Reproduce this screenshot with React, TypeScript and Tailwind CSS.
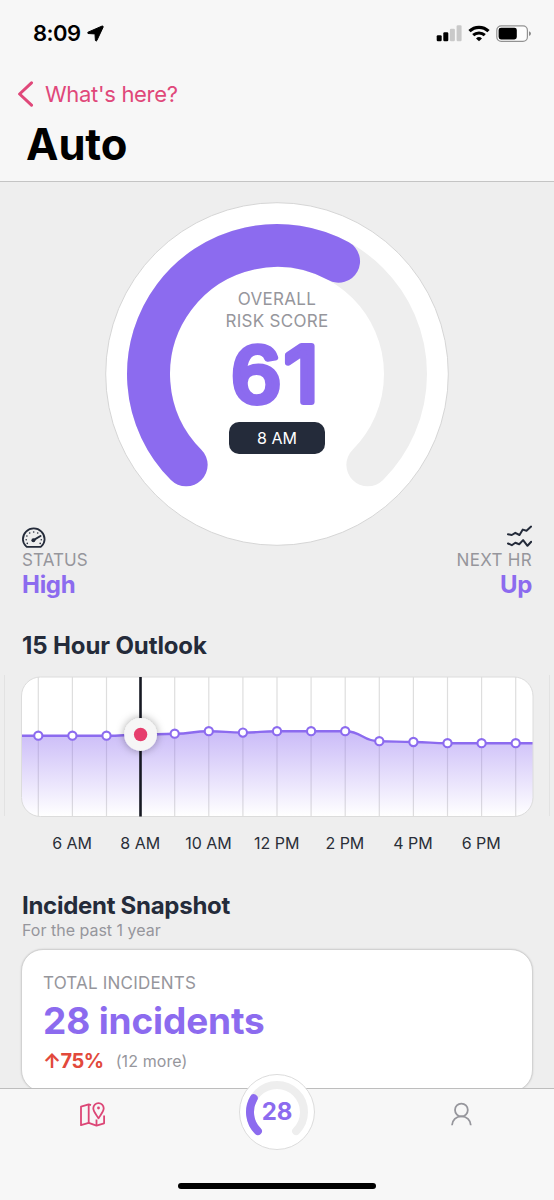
import React from "react";

const PURPLE = "#8c6bef";

const hours = [
   { label: "", y: 735.7 },
   { label: "6 AM", y: 735.7 },
   { label: "", y: 735.7 },
   { label: "8 AM", y: 734.7 },
   { label: "", y: 733.7 },
   { label: "10 AM", y: 731.2 },
   { label: "", y: 732.6 },
   { label: "12 PM", y: 731.2 },
   { label: "", y: 731.2 },
   { label: "2 PM", y: 731.2 },
   { label: "", y: 741.2 },
   { label: "4 PM", y: 742 },
   { label: "", y: 743.2 },
   { label: "6 PM", y: 743.2 },
   { label: "", y: 743.2 },
].map((hour, i) => ({ label: hour.label, x: 38.3 + i * 34.1, y: hour.y - 675 }));

// Open ring, 270 degrees long, starting at the bottom left
const arcPath = (c: number, r: number, percent: number) => {
   const point = (deg: number) => {
      const rad = (deg * Math.PI) / 180;
      return `${(c + r * Math.sin(rad)).toFixed(2)} ${(c - r * Math.cos(rad)).toFixed(2)}`;
   };
   const sweep = (270 * percent) / 100;
   return `M${point(-135)} A${r} ${r} 0 ${sweep > 180 ? 1 : 0} 1 ${point(-135 + sweep)}`;
};

function SpeedometerIcon() {
   return (
      <svg width="24" height="28" viewBox="0 0 24 28" fill="none" stroke="#242b3a">
         <path
            d="M4.2 23.3C2 21.3.9 18.9.9 16.2a10.85 10.85 0 0 1 21.7 0c0 2.7-1.1 5.1-3.3 7.1q-.6.6-1.5.6H5.7q-.9 0-1.5-.6Z"
            strokeWidth="1.8"
            strokeLinejoin="round"
         />
         <path d="m11.5 17.2 7-4.2" strokeWidth="2" strokeLinecap="round" />
         <g fill="#242b3a" stroke="none">
            <circle cx="11.4" cy="17.2" r="2" />
            <circle cx="11.7" cy="9" r="0.8" />
            <circle cx="7.7" cy="10" r="0.8" />
            <circle cx="15.7" cy="10" r="0.8" />
            <circle cx="4.9" cy="13" r="0.8" />
            <circle cx="4.2" cy="16.7" r="0.8" />
            <circle cx="5.3" cy="20.4" r="0.8" />
            <circle cx="19.3" cy="16.7" r="0.8" />
            <circle cx="18.2" cy="20.4" r="0.8" />
         </g>
      </svg>
   );
}

function TrendIcon() {
   return (
      <svg width="28" height="28" viewBox="0 0 28 28" fill="none" stroke="#242b3a" strokeWidth="2" strokeLinecap="round" strokeLinejoin="round">
         <path d="M4 11.3 7.8 12l3.5-2.2 4.2 2.2 3.3-5.4 3.7 1.1 4.6-4.1" />
         <path d="m4 20.5 3.8 1.7 3.5-2.5 3.9 1.5 3.9-4.1 4.4 5.7 3.7-4" />
      </svg>
   );
}

function MapIcon() {
   return (
      <svg width="27" height="27" viewBox="0 0 27 27" fill="none" stroke="#dc4676" strokeWidth="1.8" strokeLinejoin="round">
         <path d="M12 4.2 9.7 3.3 2 5.7V24.2l7.7-2.3 7.8 2.7 7.6-2.3V14.5" />
         <path d="M9.7 3.3V21.9M17.5 24.6V18.5" />
         <path d="M19.5 17.3c-1.7-3.2-5.2-6.5-5.2-10a5.2 5.2 0 0 1 10.4 0c0 3.5-3.5 6.8-5.2 10Z" />
         <circle cx="19.5" cy="7" r="1.4" fill="#dc4676" stroke="none" />
      </svg>
   );
}

function PersonIcon() {
   return (
      <svg width="26" height="27" viewBox="0 0 26 27" fill="none" stroke="#96969c" strokeWidth="1.8">
         <circle cx="13.4" cy="9" r="6.4" />
         <path d="M4 24.2c.3-5 4-8.8 9.4-8.8s9.1 3.8 9.4 8.8" />
      </svg>
   );
}

function StatusBar() {
   return (
      <div className="flex h-[67px] items-center justify-between pl-[33px] pr-[22px]">
         <div className="flex items-center gap-[6px]">
            <span className="-mt-px text-[22px] font-semibold leading-none tracking-[-0.5px]">8:09</span>
            <svg width="17" height="17" viewBox="0 0 17 17">
               <path
                  d="M15.2 1 1 7.2q-.8.6 0 1.3l6.6.4q.4 0 .4.5l.4 6q.6 1.4 1.4.2L16.2 2q.2-1-1-1Z"
                  stroke="#000"
                  strokeLinejoin="round"
               />
            </svg>
         </div>
         <div className="flex items-center gap-[6px]">
            <svg width="26" height="17" viewBox="0 0 26 17">
               <rect x="0.7" y="10.2" width="5" height="6" rx="1.2" />
               <rect x="7.3" y="7.2" width="5" height="9" rx="1.2" />
               <rect x="13.9" y="3.7" width="5" height="12.5" rx="1.2" fill="#c9c9c9" />
               <rect x="20.6" y="0.2" width="5" height="16" rx="1.2" fill="#c9c9c9" />
            </svg>
            <svg width="22" height="17" viewBox="0 0 22 17" fill="none" stroke="#000">
               <path d="M1.5 6.2a13.6 13.6 0 0 1 19 0" strokeWidth="3.2" />
               <path d="M5.2 10.2a8.4 8.4 0 0 1 11.6 0" strokeWidth="3" />
               <path d="M11 16.3 8 13.4a4.4 4.4 0 0 1 6 0Z" fill="#000" stroke="none" />
            </svg>
            <svg width="36" height="17" viewBox="0 0 36 17">
               <rect x="0.8" y="0.8" width="30.6" height="15.6" rx="4.4" fill="#fdfdfd" stroke="#929292" strokeWidth="1.2" />
               <rect x="2.6" y="2.7" width="18.2" height="11.8" rx="2.4" />
               <path d="M33 6.3q2 .6 2 2.3t-2 2.3Z" fill="#8a8a8a" />
            </svg>
         </div>
      </div>
   );
}

function Header() {
   return (
      <header className="h-[182px] shrink-0 border-b border-[#c4c4c4] bg-[#f7f7f7]">
         <StatusBar />
         <button className="flex h-[54px] items-center gap-[11px] pl-[17px] text-[#e0487a]">
            <svg width="17" height="26" viewBox="0 0 17 26" fill="none" stroke="currentColor">
               <path d="M14.5 1.8 2.6 13l11.9 11.2" strokeWidth="3" strokeLinecap="round" strokeLinejoin="round" />
            </svg>
            <span className="text-[22px] leading-none tracking-[-0.32px]">What's here?</span>
         </button>
         <h1 className="pl-[26px] text-[43.5px] font-bold leading-[46px] tracking-[-0.1px] text-black">Auto</h1>
      </header>
   );
}

function RiskGauge() {
   return (
      <div className="relative h-[344px] w-[344px] shrink-0 self-start">
         <svg width="344" height="344" viewBox="0 0 344 344" fill="none">
            <circle cx="172" cy="172" r="171.3" fill="#fff" stroke="#d6d6d6" />
            <path d={arcPath(172, 128.5, 100)} stroke="#eeeeee" strokeWidth="43" strokeLinecap="round" />
            <path d={arcPath(172, 128.5, 60.6)} stroke={PURPLE} strokeWidth="43" strokeLinecap="round" />
            {/* thick round stroke softens the digit corners */}
            <text
               className="font-['Liberation_Sans',sans-serif]"
               transform="scale(1.1 1)"
               x="115"
               y="200"
               fontSize="80"
               fill={PURPLE}
               stroke={PURPLE}
               strokeWidth="6"
               strokeLinejoin="round"
            >
               6
               <tspan className="font-['Inter',sans-serif]" x="163" fontSize="77">
                  1
               </tspan>
            </text>
         </svg>
         <div className="absolute inset-x-0 top-[87px] text-center text-[17px] leading-[21.5px] tracking-[0.3px] text-[#96969c]">
            OVERALL
            <br />
            RISK SCORE
         </div>
         <div className="absolute left-[124px] top-[220px] flex h-8 w-24 items-center justify-center rounded-[10px] bg-[#242b3a] text-base text-white">
            8 AM
         </div>
      </div>
   );
}

function Outlook() {
   const line = hours.reduce((path, p, i) => {
      if (i === 0) return `M22 ${p.y} L${p.x} ${p.y}`;
      const prev = hours[i - 1];
      const mid = (prev.x + p.x) / 2;
      return `${path} C${mid} ${prev.y} ${mid} ${p.y} ${p.x} ${p.y}`;
   }, "");
   const fullLine = `${line} L533 ${hours[14].y}`;

   return (
      <section>
         <h2 className="h-[46px] pl-[22px] text-2xl font-bold leading-[33px] tracking-[-0.12px] text-[#242b3a]">15 Hour Outlook</h2>
         <svg className="block" width="554" height="144" viewBox="0 0 554 144" fill="none">
            <defs>
               <linearGradient id="area" x1="0" y1="56" x2="0" y2="141" gradientUnits="userSpaceOnUse">
                  <stop offset="0" stopColor={PURPLE} stopOpacity="0.46" />
                  <stop offset="1" stopColor={PURPLE} stopOpacity="0" />
               </linearGradient>
               <clipPath id="panel">
                  <rect x="21.5" y="2" width="511.5" height="139.5" rx="19" />
               </clipPath>
               <filter id="thumb" x="-50%" y="-50%" width="200%" height="200%">
                  <feDropShadow dx="0" dy="0" stdDeviation="4.5" floodOpacity="0.35" />
               </filter>
            </defs>
            <path d="M4.5 0V141M549.5 0V141" stroke="#e2e2e2" />
            <rect x="21.5" y="2" width="511.5" height="139.5" rx="19" fill="#fff" />
            <g clipPath="url(#panel)">
               {hours.map((p) => (
                  <path key={p.x} d={`M${p.x} 0V142`} stroke="#dedede" strokeWidth="1.2" />
               ))}
               <path d={`${fullLine} V142 H22 Z`} fill="url(#area)" />
               <path d={fullLine} stroke={PURPLE} strokeWidth="2.4" />
            </g>
            <rect x="21.5" y="2" width="511.5" height="139.5" rx="19" stroke="#dcdcdc" />
            <path d="M140.5 2V141.5" stroke="#171923" strokeWidth="2.6" />
            {hours.map((p) => (
               <circle key={p.x} cx={p.x} cy={p.y} r="4.1" fill="#fff" stroke={PURPLE} strokeWidth="2.1" />
            ))}
            <circle cx="140.6" cy="59.5" r="16.4" fill="#f6f6f6" filter="url(#thumb)" />
            <circle cx="140.6" cy="59.5" r="6.7" fill="#e63e6d" />
         </svg>
         <div className="flex h-[48px] pl-[38px] text-base leading-[48px] text-[#2a2e38]">
            {hours
               .filter((p) => p.label)
               .map((p) => (
                  <span key={p.label} className="w-[68.2px] whitespace-nowrap text-center">
                     {p.label}
                  </span>
               ))}
         </div>
      </section>
   );
}

function Snapshot() {
   return (
      <section className="mt-6 px-[21px]">
         <h2 className="pl-px text-2xl font-bold leading-[30px] tracking-[-0.28px] text-[#242b3a]">Incident Snapshot</h2>
         <p className="h-[28px] pl-px text-base leading-[19px] text-[#96969c]">For the past 1 year</p>
         <div className="h-[143px] rounded-[22px] border border-[#d2d2d2] bg-white px-[21px] pt-[21px] shadow-[0_0_2px_rgba(0,0,0,0.15)]">
            <div className="text-[17px] leading-[24px] tracking-[0.2px] text-[#96969c]">TOTAL INCIDENTS</div>
            <div className="text-[37px] font-bold leading-[52px] tracking-[-0.15px] text-[#8c6bef]">28 incidents</div>
            <div className="flex items-center gap-3 leading-[28px]">
               <span className="text-[20px] font-bold tracking-[-0.5px] text-[#e2493b]">↑75%</span>
               <span className="text-base tracking-[0.1px] text-[#96969c]">(12 more)</span>
            </div>
         </div>
      </section>
   );
}

function TabBar() {
   return (
      <nav className="relative flex h-[112px] shrink-0 justify-between border-t border-[#bdbdbd] bg-[#f7f7f7] pl-[79px] pr-[80px] pt-3">
         <MapIcon />
         <PersonIcon />
         <div className="absolute left-[239px] top-[-15px] h-[76px] w-[76px]">
            <svg className="absolute inset-0" width="76" height="76" viewBox="0 0 76 76" fill="none" strokeLinecap="round">
               <circle cx="38" cy="38" r="37.5" fill="#fff" stroke="#dcdcdc" />
               <path d={arcPath(38, 27, 100)} stroke="#eeeeee" strokeWidth="8" />
               <path d={arcPath(38, 27, 28)} stroke={PURPLE} strokeWidth="8" />
            </svg>
            <div className="relative text-center text-2xl font-bold leading-[76px] text-[#8c6bef]">28</div>
         </div>
         <div className="absolute bottom-[11px] left-[178px] h-[6.5px] w-[198px] rounded-full bg-black" />
      </nav>
   );
}

export default function App() {
   return (
      <div className="flex h-[1200px] w-[554px] flex-col overflow-hidden bg-[#eeeeee] font-['Inter',sans-serif]">
         <Header />
         <main className="min-h-0 flex-1 overflow-hidden">
            <section className="flex h-[447px] items-start px-[22px] pt-5">
               <div className="flex flex-1 flex-col pt-[321px]">
                  <SpeedometerIcon />
                  <span className="text-[17px] leading-[18px] tracking-[0.1px] text-[#96969c]">STATUS</span>
                  <span className="text-2xl font-bold leading-[32px] tracking-[-0.3px] text-[#8c6bef]">High</span>
               </div>
               <RiskGauge />
               <div className="flex flex-1 flex-col items-end whitespace-nowrap pt-[321px]">
                  <TrendIcon />
                  <span className="text-[17px] leading-[18px] tracking-[0.3px] text-[#96969c]">NEXT HR</span>
                  <span className="text-2xl font-bold leading-[32px] tracking-[-0.3px] text-[#8c6bef]">Up</span>
               </div>
            </section>
            <Outlook />
            <Snapshot />
         </main>
         <TabBar />
      </div>
   );
}
